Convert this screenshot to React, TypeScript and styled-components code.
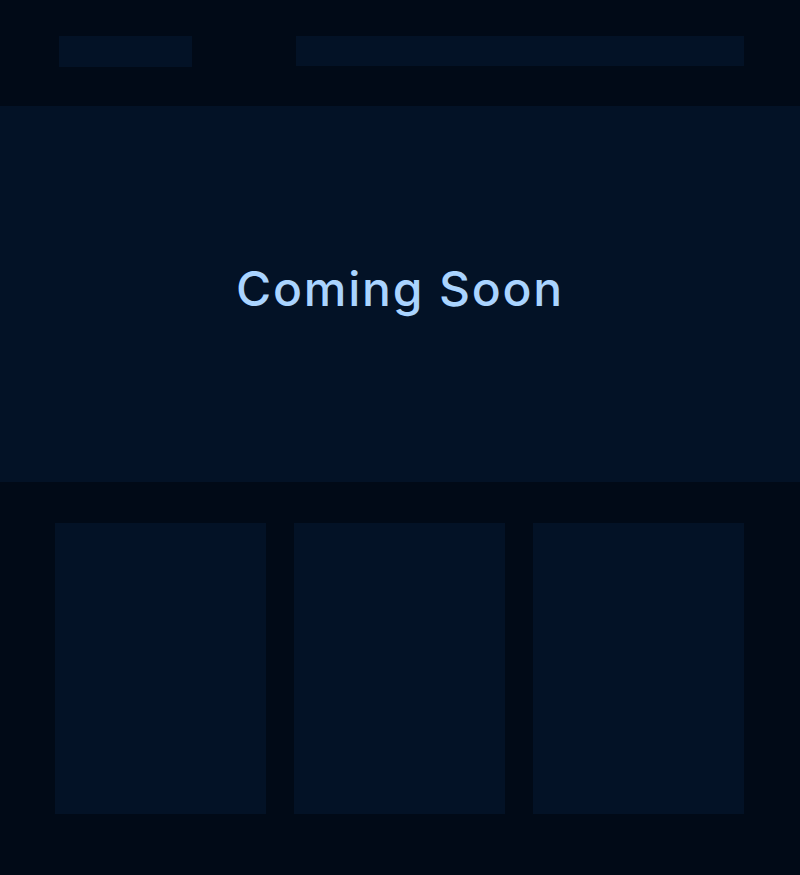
import React from "react";
import styled, { createGlobalStyle } from "styled-components";

const Global = createGlobalStyle`
  html, body { margin: 0; padding: 0; background: #010a17; }
  body { font-family: "Inter", "Open Sans", sans-serif; }
`;

const Page = styled.div`
  width: 800px;
  min-height: 875px;
  background: #010a17;
  display: flex;
  flex-direction: column;
`;

const Header = styled.header`
  height: 106px;
  box-sizing: border-box;
  padding: 36px 56px 0 59px;
  display: flex;
  align-items: flex-start;
  justify-content: space-between;
`;

const Placeholder = styled.div<{ $w: number; $h: number }>`
  width: ${(p) => p.$w}px;
  height: ${(p) => p.$h}px;
  background: #031226;
`;

const Hero = styled.section`
  height: 376px;
  background: #031226;
  display: flex;
  align-items: center;
  justify-content: center;
`;

const Title = styled.h1`
  margin: 0;
  padding-bottom: 12px;
  font-family: "Inter", "Open Sans", sans-serif;
  font-weight: 500;
  font-size: 48px;
  letter-spacing: 1.8px;
  color: #aad4ff;
`;

const Cards = styled.section`
  padding: 41px 56px 61px 55px;
  display: grid;
  grid-template-columns: repeat(3, 1fr);
  gap: 28px;
`;

const Card = styled.div`
  height: 291px;
  background: #031226;
`;

export default function App() {
  return (
    <Page>
      <Global />
      <Header>
        <Placeholder $w={133} $h={31} />
        <Placeholder $w={448} $h={30} />
      </Header>
      <Hero>
        <Title>Coming Soon</Title>
      </Hero>
      <Cards>
        <Card />
        <Card />
        <Card />
      </Cards>
    </Page>
  );
}
